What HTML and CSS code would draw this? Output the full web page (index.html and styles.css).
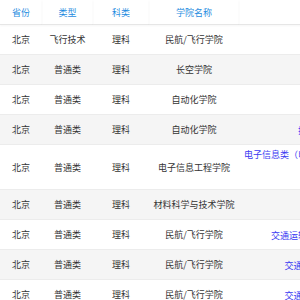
FILE: index.html
```html
<!DOCTYPE html>
<html lang="zh-CN">
<head>
    <meta charset="UTF-8">
    <meta name="viewport" content="width=device-width, initial-scale=1.0">
    <title>招生专业</title>
    <link rel="stylesheet" href="styles.css">
</head>
<body>
    <table class="major-table">
        <colgroup>
            <col class="col-province">
            <col class="col-type">
            <col class="col-subject">
            <col class="col-college">
            <col class="col-major">
        </colgroup>
        <thead>
            <tr>
                <th>省份</th>
                <th>类型</th>
                <th>科类</th>
                <th>学院名称</th>
                <th>专业名称</th>
            </tr>
        </thead>
        <tbody>
            <tr>
                <td>北京</td><td>飞行技术</td><td>理科</td><td>民航/飞行学院</td>
                <td class="major"><a href="#">飞行技术</a></td>
            </tr>
            <tr>
                <td>北京</td><td>普通类</td><td>理科</td><td>长空学院</td>
                <td class="major"><a href="#">航空航天类</a></td>
            </tr>
            <tr>
                <td>北京</td><td>普通类</td><td>理科</td><td>自动化学院</td>
                <td class="major"><a href="#">自动化类</a></td>
            </tr>
            <tr>
                <td>北京</td><td>普通类</td><td>理科</td><td>自动化学院</td>
                <td class="major"><a href="#">探测制导与控制技术（导航类）</a></td>
            </tr>
            <tr>
                <td>北京</td><td>普通类</td><td>理科</td><td>电子信息工程学院</td>
                <td class="major"><a href="#">电子信息类（电子信息工程、通信工程、电子科学与技术、<br>信息工程、集成电路设计与<br>集成系统）</a></td>
            </tr>
            <tr>
                <td>北京</td><td>普通类</td><td>理科</td><td>材料科学与技术学院</td>
                <td class="major"><a href="#">材料类</a></td>
            </tr>
            <tr>
                <td>北京</td><td>普通类</td><td>理科</td><td>民航/飞行学院</td>
                <td class="major"><a href="#">交通运输（交通运输、交通工程、飞行签派）</a></td>
            </tr>
            <tr>
                <td>北京</td><td>普通类</td><td>理科</td><td>民航/飞行学院</td>
                <td class="major"><a href="#">交通运输（飞行技术、航空签派方向）</a></td>
            </tr>
            <tr>
                <td>北京</td><td>普通类</td><td>理科</td><td>民航/飞行学院</td>
                <td class="major"><a href="#">交通运输（飞行技术、航空签派方向）</a></td>
            </tr>
        </tbody>
    </table>
</body>
</html>
```

FILE: styles.css
```css
html, body {
    margin: 0;
    padding: 0;
    overflow: hidden;
    background-color: #fff;
}
body {
    font-family: "Noto Sans CJK SC", "Noto Sans", sans-serif;
    font-size: 9px;
    line-height: 13px;
    color: #333;
}
.major-table {
    width: 483px;
    table-layout: fixed;
    border-collapse: separate;
    border-spacing: 0;
}
.col-province {
    width: 42px;
}
.col-type {
    width: 51px;
}
.col-subject {
    width: 56px;
}
.col-college {
    width: 90px;
}
.col-major {
    width: 244px;
}
.major-table th {
    padding: 6px 5px 5px;
    font-weight: normal;
    color: #1f8ce0;
    text-align: center;
    white-space: nowrap;
    border-bottom: 1px solid #e6e6e6;
    box-shadow: 0 1px 2px rgba(0, 0, 0, 0.04);
}
.major-table td {
    padding: 8px 2px;
    text-align: center;
    vertical-align: middle;
    white-space: nowrap;
    border-bottom: 1px solid #ececec;
}
.major-table tbody tr:nth-child(even) td {
    background-color: #f5f5f5;
}
.major-table td.major {
    padding: 3px 5px 2px;
}
.major a {
    color: #3b3bf2;
    text-decoration: none;
}
```
